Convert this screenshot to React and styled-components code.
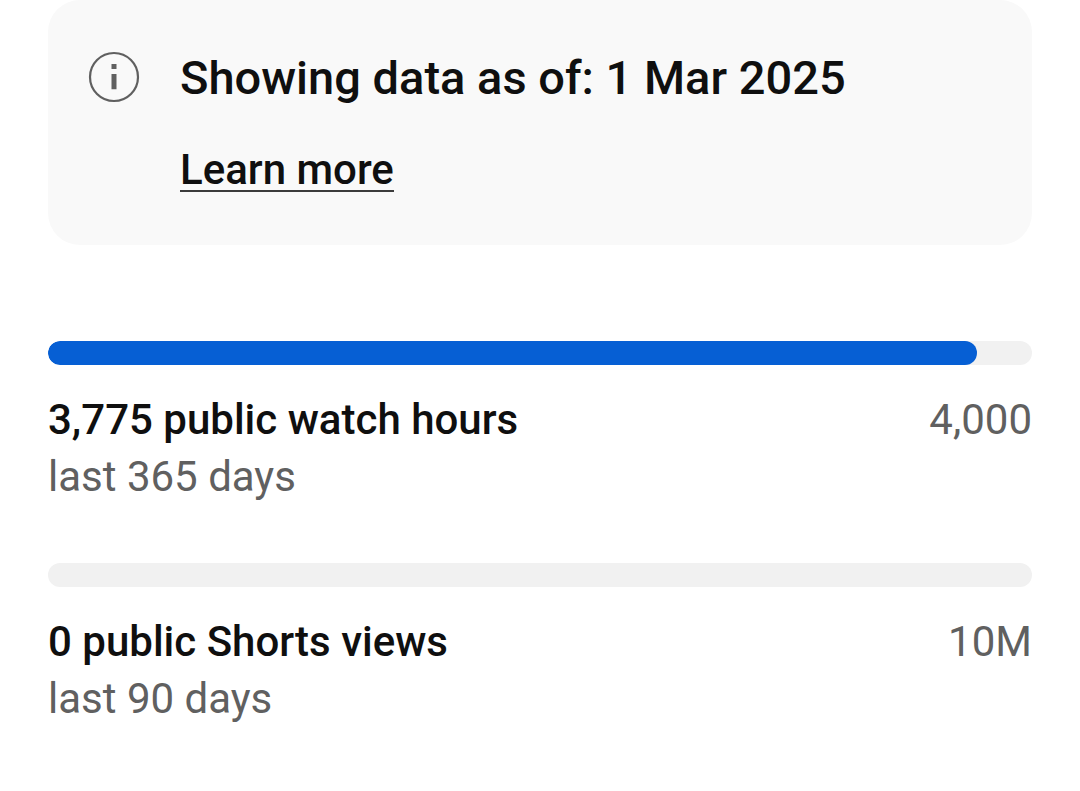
import React from 'react';
import styled, { createGlobalStyle } from 'styled-components';

const GlobalStyle = createGlobalStyle`
  * {
    box-sizing: border-box;
  }

  body {
    margin: 0;
    background-color: #ffffff;
    color: #0f0f0f;
    font-family: Roboto, 'Noto Sans', sans-serif;
  }
`;

const Page = styled.main`
  padding: 0 48px 64px;
`;

const Notice = styled.section`
  display: flex;
  align-items: flex-start;
  gap: 40px;
  padding: 48px 40px 53px;
  border-radius: 32px;
  background-color: #f9f9f9;
`;

const InfoIcon = styled.svg`
  flex: none;
  width: 52px;
  height: 52px;
  margin-top: 3px;
`;

const NoticeTitle = styled.h1`
  margin: 0 0 42px;
  font-size: 47px;
  font-weight: 500;
  line-height: 60px;
`;

const LearnMore = styled.a`
  display: inline-block;
  border-bottom: 2px solid #3c3c3c;
  color: inherit;
  font-size: 42px;
  font-weight: 500;
  line-height: 40px;
  text-decoration: none;
`;

const Goals = styled.div`
  display: flex;
  flex-direction: column;
  gap: 58px;
  margin-top: 96px;
`;

const Track = styled.div`
  height: 24px;
  margin-bottom: 26px;
  border-radius: 12px;
  background-color: #f1f1f1;
  overflow: hidden;
`;

const Fill = styled.div`
  height: 100%;
  border-radius: 12px;
  background-color: #065fd4;
`;

const GoalRow = styled.div`
  display: flex;
  justify-content: space-between;
  font-size: 42px;
  line-height: 57px;
`;

const GoalName = styled.h2`
  margin: 0;
  font-size: inherit;
  font-weight: 500;
`;

const Muted = styled.span`
  color: #606060;
`;

const Period = styled.p`
  margin: 0;
  color: #606060;
  font-size: 42px;
  line-height: 57px;
`;

const goals = [
  { value: 3775, max: 4000, name: '3,775 public watch hours', target: '4,000', period: 'last 365 days' },
  { value: 0, max: 10000000, name: '0 public Shorts views', target: '10M', period: 'last 90 days' },
];

function Goal({ value, max, name, target, period }) {
  return (
    <section>
      <Track role="progressbar" aria-label={name} aria-valuenow={value} aria-valuemin={0} aria-valuemax={max}>
        <Fill style={{ width: `${(value / max) * 100}%` }} />
      </Track>
      <GoalRow>
        <GoalName>{name}</GoalName>
        <Muted>{target}</Muted>
      </GoalRow>
      <Period>{period}</Period>
    </section>
  );
}

function App() {
  return (
    <>
      <GlobalStyle />
      <Page>
        <Notice>
          <InfoIcon viewBox="0 0 52 52" fill="none" aria-hidden="true">
            <circle cx="26" cy="26" r="24" stroke="#606060" strokeWidth="2.2" />
            <path d="M23.5 13h5v5h-5zM23.5 23h5v15.3h-5z" fill="#606060" />
          </InfoIcon>
          <div>
            <NoticeTitle>Showing data as of: 1 Mar 2025</NoticeTitle>
            <LearnMore href="#learn-more">Learn more</LearnMore>
          </div>
        </Notice>
        <Goals>
          {goals.map((goal) => (
            <Goal key={goal.name} {...goal} />
          ))}
        </Goals>
      </Page>
    </>
  );
}

export default App;
